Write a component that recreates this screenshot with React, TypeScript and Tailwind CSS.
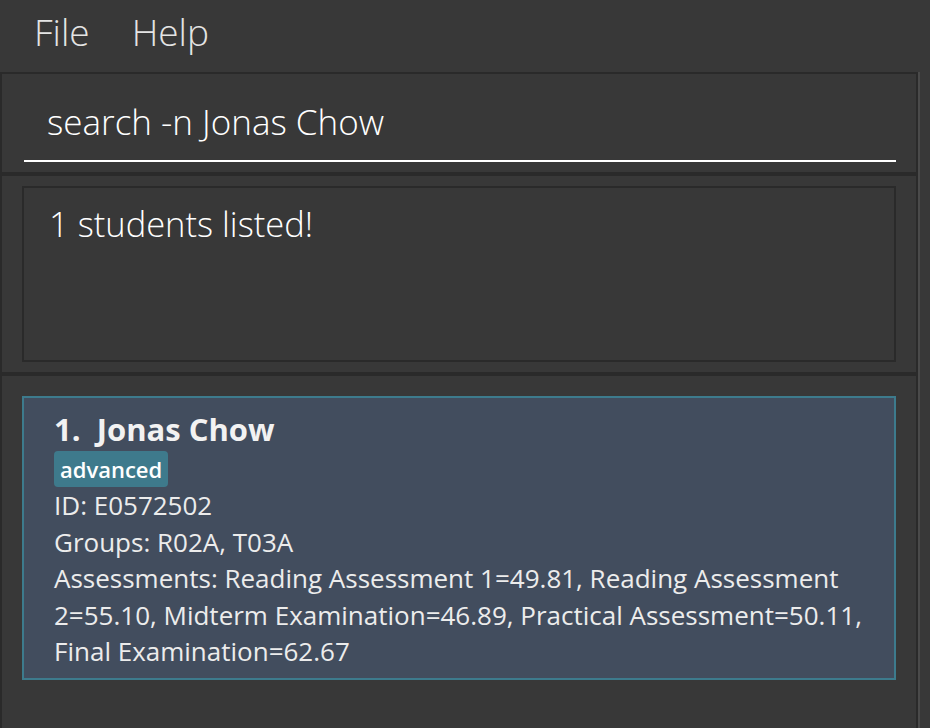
import React from "react";

export default function App() {
  return (
    <div className="w-[930px] h-[728px] bg-[#383838] flex flex-col overflow-hidden font-['Open_Sans',sans-serif]">
      <div className="h-[72px] flex items-start pt-[7px] pl-[34px] gap-[42px] text-[37px] leading-[50px] font-light text-[#e4e4e4]">
        <span>File</span>
        <span>Help</span>
      </div>
      <div className="flex flex-1 min-h-0">
        <div className="w-[918px] border-l-2 border-t-2 border-r-2 border-[#2a2a2a] flex flex-col">
          <div className="h-[98px] pl-[22px] pr-[20px] pt-[24px]">
            <div className="h-[64px] border-b-2 border-white pl-[23px] text-[35px] leading-[48px] font-light text-white">
              search -n Jonas Chow
            </div>
          </div>
          <div className="h-[4px] bg-[#2a2a2a]" />
          <div className="h-[196px] pt-[10px] pl-[20px] pr-[20px]">
            <div className="h-[176px] border-2 border-[#2a2a2a] pl-[25px] pt-[12px] text-[34.5px] leading-[48px] font-light text-white">
              1 students listed!
            </div>
          </div>
          <div className="h-[4px] bg-[#2a2a2a]" />
          <div className="flex-1 pt-[20px] pl-[20px] pr-[20px]">
            <div className="h-[284px] border-2 border-[#3d7b8d] bg-[#424d5e] pl-[30px] pr-[20px] pt-[11px] text-[#ececec]">
              <div className="text-[31px] leading-[40px] font-bold text-[#f2f2f2]">1.&nbsp; Jonas Chow</div>
              <div className="mt-[2px] flex">
                <span className="h-[36px] px-[6px] rounded-[4px] bg-[#3e7a8c] text-[22px] leading-[36px] font-semibold text-white">
                  advanced
                </span>
              </div>
              <div className="text-[26px] leading-[36.5px]">
                <div>ID: E0572502</div>
                <div>Groups: R02A, T03A</div>
                <div>
                  Assessments: Reading Assessment 1=49.81, Reading Assessment 2=55.10, Midterm Examination=46.89, Practical Assessment=50.11, Final Examination=62.67
                </div>
              </div>
            </div>
          </div>
        </div>
        <div className="w-[2px] bg-[#4a4a4a]" />
      </div>
    </div>
  );
}
